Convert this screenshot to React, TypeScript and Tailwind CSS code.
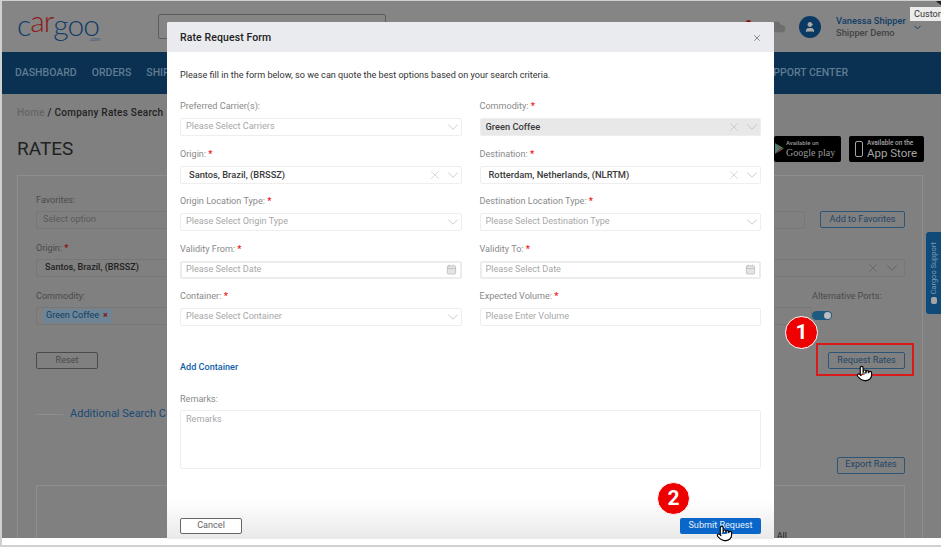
import React from "react";
import { Calendar, ChevronDown, Cloud, Pointer, User, X } from "lucide-react";

/* ------------------------------------------------------------------ */
/*  Small pieces                                                      */
/* ------------------------------------------------------------------ */

function Req() {
  return <span className="text-[#f01c1c] font-bold"> *</span>;
}

function Label({ text, req }: { text: string; req?: boolean }) {
  return (
    <div className="h-[11px] leading-[11px] text-[9.1px] text-[#8a8a8a] mb-[6px]">
      {text}
      {req && <Req />}
    </div>
  );
}

interface FieldProps {
  label: string;
  req?: boolean;
  value?: string;
  placeholder?: string;
  clear?: boolean;
  chevron?: boolean;
  date?: boolean;
  disabled?: boolean;
}

function Field({ label, req, value, placeholder, clear, chevron = true, date, disabled }: FieldProps) {
  const padding = date ? "pl-[4px] pr-[3px]" : value && !disabled ? "pl-[8px]" : "pl-[5px]";
  return (
    <div>
      <Label text={label} req={req} />
      <div
        className={`h-[18px] rounded-[2px] flex items-center ${padding} ${disabled ? "bg-[#e8e8e8]" : "bg-white"} ${
          date ? "border-2 border-[#ececec]" : "border border-[#eeeeee]"
        }`}
      >
        <span
          className={`flex-1 truncate ${
            value ? "text-[9.3px] text-[#3a3a3a] font-medium" : "text-[9.1px] text-[#a8a8a8]"
          }`}
        >
          {value || placeholder}
        </span>
        {clear && <X className="w-[14px] h-[14px] text-[#b5b5b5] mr-[2px]" strokeWidth={0.9} />}
        {chevron && !date && (
          <ChevronDown className="w-[18px] h-[18px] text-[#b5b5b5] -mr-[1px]" strokeWidth={0.9} />
        )}
        {date && <Calendar className="w-[11px] h-[11px] text-[#b5b5b5]" fill="#e4e4e4" strokeWidth={1.5} />}
      </div>
    </div>
  );
}

function BgButton({ children, width }: { children: React.ReactNode; width: string }) {
  return (
    <div
      className={`${width} h-[17px] flex items-center justify-center border border-[#2c5577] rounded-[2px] text-[9.1px] text-[#1f4565]`}
    >
      {children}
    </div>
  );
}

function BgLabel({ text, req }: { text: string; req?: boolean }) {
  return (
    <div className="h-[11px] leading-[11px] text-[9.1px] text-[#4a4a4a] mb-[5px]">
      {text}
      {req && <span className="text-[#8a1010] font-bold"> *</span>}
    </div>
  );
}

function HandCursor({ className }: { className: string }) {
  return (
    <div className={`absolute ${className}`}>
      <Pointer className="w-[17px] h-[17px] text-black" fill="#ffffff" strokeWidth={1.6} />
    </div>
  );
}

function Badge({ n, className }: { n: string; className: string }) {
  return (
    <div
      className={`absolute w-[33px] h-[33px] rounded-full bg-[#ee0000] border border-white text-white font-bold text-[21px] flex items-center justify-center ${className}`}
    >
      {n}
    </div>
  );
}

/* ------------------------------------------------------------------ */
/*  Page behind the dialog                                            */
/* ------------------------------------------------------------------ */

function Header() {
  return (
    <div className="h-[51px] flex items-center bg-[#858585] pl-[15px] pr-[18px]">
      <div className="w-[141px] flex flex-col font-['Lato',sans-serif] leading-none">
        <div className="text-[30px] font-light tracking-[-1px] h-[24px] leading-[26px] text-[#123d6b]">
          c
          <span className="inline-block -translate-y-[4px] text-[#8c1a1a]">ar</span>
          goo
        </div>
        <div className="w-[83px] mt-[1px] text-right text-[5px] leading-[6px] text-[#35557a]">
          <span className="text-[#8c1a1a]">.</span>com
        </div>
      </div>
      <div className="w-[228px] h-[25px] border border-[#5c5c5c] rounded-[2px]" />
      <div className="flex-1 flex justify-end items-center gap-[15px] pr-[13px]">
        <div className="relative w-[12px] h-[14px]">
          <div className="absolute top-0 left-[3px] w-[5px] h-[6px] rounded-full bg-[#8a1212]" />
        </div>
        <Cloud className="w-[16px] h-[16px] text-[#6e6e6e]" fill="#6e6e6e" />
      </div>
      <div className="w-[22px] h-[22px] rounded-full bg-[#0a3a63] flex items-center justify-center mr-[15px]">
        <User className="w-[12px] h-[12px] text-[#a9a9a9]" fill="#a9a9a9" />
      </div>
      <div className="w-[72px] text-[9.3px] leading-[12px] font-medium whitespace-nowrap">
        <div className="text-[#103d66]">Vanessa Shipper</div>
        <div className="text-[#444444]">Shipper Demo</div>
      </div>
      <ChevronDown className="w-[11px] h-[11px] text-[#103d66] mt-[1px] ml-[4px]" />
    </div>
  );
}

function Nav() {
  return (
    <div className="h-[42px] flex items-center bg-[#0a3152] pl-[13px] pr-[93px] gap-[15px] text-[10.5px] font-medium text-[#5f7c93] whitespace-nowrap">
      <span>DASHBOARD</span>
      <span>ORDERS</span>
      <span>SHIPMENTS</span>
      <span className="ml-auto">SUPPORT CENTER</span>
    </div>
  );
}

function AppBadges() {
  return (
    <div className="flex gap-[8px] -mr-[1px]">
      <div className="w-[67px] h-[26px] bg-black rounded-[2px] flex items-center pl-[1px] text-[#9a9a9a]">
        <svg viewBox="0 0 10 12" className="w-[9px] h-[11px] mr-[2px]">
          <polygon points="0,0 6,6 0,12" fill="#4f7a78" />
          <polygon points="0,0 10,6 6,6" fill="#5f8a5a" />
          <polygon points="0,12 10,6 6,6" fill="#8a4a3a" />
        </svg>
        <div className="flex flex-col">
          <span className="text-[6px] leading-[8px] font-medium">Available on</span>
          <span className="text-[10px] leading-[11px] font-['Liberation_Serif',serif] whitespace-nowrap">
            Google play
          </span>
        </div>
      </div>
      <div className="w-[75px] h-[26px] bg-black rounded-[2px] flex items-center pl-[6px] gap-[4px] text-[#a5a5a5]">
        <div className="w-[8px] h-[16px] border border-[#a5a5a5] rounded-[2px]" />
        <div className="flex flex-col">
          <span className="text-[6.5px] leading-[8px] font-medium whitespace-nowrap">Available on the</span>
          <span className="text-[11.5px] leading-[12px] whitespace-nowrap">App Store</span>
        </div>
      </div>
    </div>
  );
}

function BgSelect({ children, flex }: { children?: React.ReactNode; flex?: boolean }) {
  return (
    <div
      className={`h-[18px] border border-[#777777] rounded-[2px] flex items-center px-[6px] text-[9.1px] ${
        flex ? "flex-1" : ""
      }`}
    >
      {children}
    </div>
  );
}

function RatesCard() {
  return (
    <div className="mt-[13px] h-[400px] border border-[#8e8e8e] pt-[19px] pl-[18px] pr-[17px]">
      <div className="flex flex-col">
        <BgLabel text="Favorites:" />
        <div className="flex gap-[15px]">
          <BgSelect flex>
            <span className="text-[#5a5a5a]">Select option</span>
          </BgSelect>
          <BgButton width="w-[85px]">Add to Favorites</BgButton>
        </div>
        <div className="h-[14px]" />
        <BgLabel text="Origin:" req />
        <BgSelect>
          <span className="flex-1 pl-[2px] text-[#222222] font-medium">Santos, Brazil, (BRSSZ)</span>
          <X className="w-[14px] h-[14px] text-[#555555] mr-[3px]" strokeWidth={0.9} />
          <ChevronDown className="w-[18px] h-[18px] text-[#555555] -mr-[3px]" strokeWidth={0.9} />
        </BgSelect>
        <div className="h-[14px]" />
        <div className="flex">
          <div className="flex-1">
            <BgLabel text="Commodity:" />
            <BgSelect>
              <span className="h-[14px] px-[3px] flex items-center gap-[4px] rounded-[1px] bg-[#6d8596] text-[#123d66]">
                Green Coffee <span className="text-[#8a1010] font-bold">×</span>
              </span>
            </BgSelect>
          </div>
          <div className="w-[93px]">
            <BgLabel text="Alternative Ports:" />
            <div className="w-[20px] h-[9px] rounded-full bg-[#1d5a80] flex justify-end items-center pr-[1px] mt-[9px]">
              <div className="w-[7px] h-[7px] rounded-full bg-[#bdbdbd]" />
            </div>
          </div>
        </div>
      </div>
      <div className="flex justify-between items-center mt-[27px]">
        <div className="w-[62px] h-[17px] flex items-center justify-center border border-[#4a4a4a] rounded-[2px] text-[9.1px] text-[#4a4a4a]">
          Reset
        </div>
        <BgButton width="w-[77px]">Request Rates</BgButton>
      </div>
      <div className="flex items-center mt-[37px]">
        <div className="w-[27px] h-px bg-[#8e8e8e] mr-[7px]" />
        <span className="text-[11px] text-[#1a4a75]">Additional Search Criteria</span>
      </div>
      <div className="flex justify-end mt-[34px]">
        <BgButton width="w-[68px]">Export Rates</BgButton>
      </div>
      <div className="mt-[11px] h-[60px] border border-[#8e8e8e] flex justify-end pt-[44px] pr-[117px]">
        <span className="text-[9.1px] leading-[12px] text-[#222222]">All</span>
      </div>
    </div>
  );
}

function Page() {
  return (
    <div className="h-[537px] overflow-hidden bg-[#808080]">
      <Header />
      <Nav />
      <div className="pl-[15px] pr-[18px]">
        <div className="mt-[13px] text-[10px] leading-[12px] tracking-[0.25px] font-medium text-[#222222]">
          <span className="text-[#666666]">Home</span> / Company Rates Search
        </div>
        <div className="mt-[16px] flex items-center justify-between">
          <h1 className="text-[19px] leading-[26px] pt-[1px] text-[#222222]">RATES</h1>
          <AppBadges />
        </div>
        <RatesCard />
      </div>
    </div>
  );
}

/* ------------------------------------------------------------------ */
/*  Dialog                                                            */
/* ------------------------------------------------------------------ */

function Dialog() {
  return (
    <div className="absolute left-[165px] top-[21px] w-[607px] h-[517px] bg-white flex flex-col rounded-t-[2px]">
      <div className="h-[30px] shrink-0 bg-[#e9ebee] flex items-center justify-between pl-[13px] pr-[12px] pt-[1px] rounded-t-[2px]">
        <span className="text-[10.5px] font-medium text-[#222222] tracking-[0.1px]">Rate Request Form</span>
        <X className="w-[10px] h-[10px] text-[#777777]" />
      </div>
      <div className="flex-1 flex flex-col px-[13px] pt-[17px] bg-[linear-gradient(to_bottom,#ffffff_92%,#e9e9e9_100%)]">
        <p className="h-[12px] leading-[12px] text-[9.1px] text-[#333333]">
          Please fill in the form below, so we can quote the best options based on your search criteria.
        </p>
        <div className="grid grid-cols-2 gap-x-[18px] gap-y-[12.5px] mt-[20px]">
          <Field label="Preferred Carrier(s):" placeholder="Please Select Carriers" />
          <Field label="Commodity:" req value="Green Coffee" clear disabled />
          <Field label="Origin:" req value="Santos, Brazil, (BRSSZ)" clear />
          <Field label="Destination:" req value="Rotterdam, Netherlands, (NLRTM)" clear />
          <Field label="Origin Location Type:" req placeholder="Please Select Origin Type" />
          <Field label="Destination Location Type:" req placeholder="Please Select Destination Type" />
          <Field label="Validity From:" req placeholder="Please Select Date" date />
          <Field label="Validity To:" req placeholder="Please Select Date" date />
          <Field label="Container:" req placeholder="Please Select Container" />
          <Field label="Expected Volume:" req placeholder="Please Enter Volume" chevron={false} />
        </div>
        <div className="mt-[35px] h-[12px] leading-[12px] text-[9.1px] font-medium text-[#0f5ea8]">Add Container</div>
        <div className="mt-[21px]">
          <div className="h-[11px] leading-[11px] text-[9.1px] text-[#8a8a8a] mb-[5px]">Remarks:</div>
          <div className="h-[59px] border border-[#eeeeee] rounded-[2px] px-[5px] pt-[2px] text-[9.1px] text-[#a8a8a8]">
            Remarks
          </div>
        </div>
        <div className="flex justify-between mt-[49px]">
          <div className="w-[62px] h-[16px] flex items-center justify-center border border-[#666666] rounded-[2px] text-[9.1px] text-[#666666] bg-white">
            Cancel
          </div>
          <div className="w-[81px] h-[16px] flex items-center justify-center rounded-[2px] bg-[#0a66c8] text-[9.1px] text-[#e8f0fa]">
            Submit Request
          </div>
        </div>
      </div>
    </div>
  );
}

/* ------------------------------------------------------------------ */
/*  App                                                               */
/* ------------------------------------------------------------------ */

export default function App() {
  return (
    <div className="relative w-[941px] h-[547px] overflow-hidden bg-white border-t border-l-2 border-b-2 border-[#d0d0d0] font-['Roboto',sans-serif]">
      <Page />
      <Dialog />

      {/* Side tab */}
      <div className="absolute left-[924px] top-[231px] w-[15px] h-[82px] bg-[#0f4a78] rounded-l-[3px] flex flex-col items-center justify-center gap-[3px]">
        <span className="[writing-mode:vertical-rl] rotate-180 text-[7.5px] text-[#7f9cb4] whitespace-nowrap">
          Cargoo Support
        </span>
        <div className="w-[6px] h-[7px] rounded-[2px] bg-[#a5a5a5]" />
      </div>

      {/* Tooltip */}
      <div className="absolute left-[908px] top-[6px] w-[40px] h-[14px] bg-[#ececec] pl-[4px] text-[9.1px] leading-[14px] text-[#333333] whitespace-nowrap">
        Custom
      </div>

      {/* Mouse pointer at the top corner */}
      <svg viewBox="0 0 6 5" className="absolute left-[933px] top-[-1px] w-[6px] h-[5px]">
        <polygon points="0,0 6,0 6,5 3,3" fill="#222222" />
      </svg>

      {/* Annotations */}
      <div className="absolute left-[814px] top-[342px] w-[98px] h-[33px] border-2 border-[#d81a1a]" />
      <Badge n="1" className="left-[783px] top-[315px]" />
      <Badge n="2" className="left-[655px] top-[481px]" />
      <HandCursor className="left-[854px] top-[364px]" />
      <HandCursor className="left-[714px] top-[524px]" />
    </div>
  );
}
